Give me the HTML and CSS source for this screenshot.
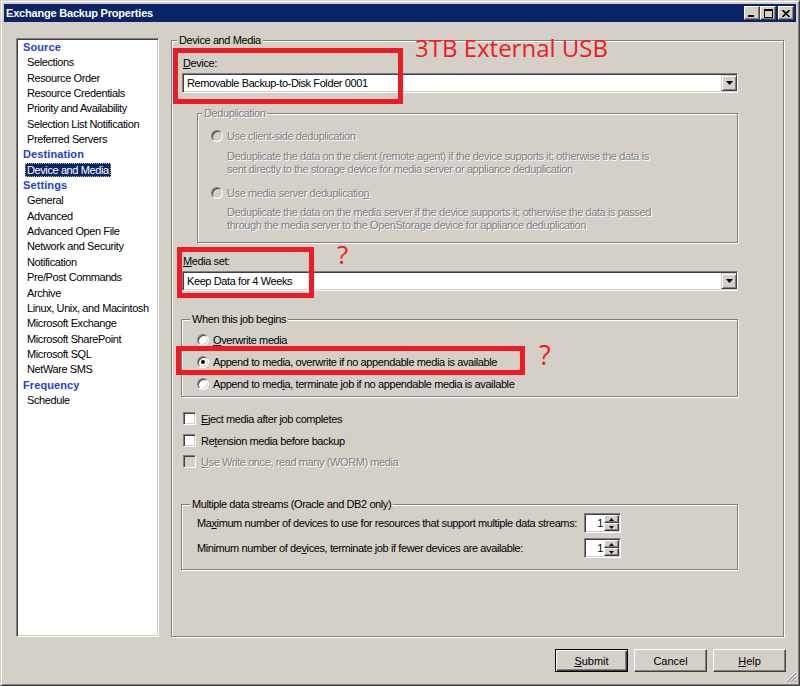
FILE: index.html
```html
<!DOCTYPE html>
<html lang="en">
<head>
  <meta charset="UTF-8" />
  <title>Exchange Backup Properties</title>
  <link rel="stylesheet" href="styles.css">
</head>
<body>
  <div class="window">
    <div class="titlebar">
      <span class="title">Exchange Backup Properties</span>
      <div class="caption">
        <span class="cap-btn"><svg width="8" height="8" viewBox="0 0 8 8"><rect x="0" y="6" width="6" height="2"/></svg></span>
        <span class="cap-btn"><svg width="9" height="9" viewBox="0 0 9 9"><rect x="0" y="0" width="9" height="2"/><rect x="0.5" y="0.5" width="8" height="8" fill="none" stroke="#000"/></svg></span>
        <span class="cap-btn close"><svg width="8" height="7" viewBox="0 0 8 7"><path d="M0.5 0l7 7M7.5 0l-7 7" stroke="#000" stroke-width="1.6"/></svg></span>
      </div>
    </div>

    <div class="content">
      <ul class="nav">
        <li class="head">Source</li>
        <li>Selections</li>
        <li>Resource Order</li>
        <li>Resource Credentials</li>
        <li>Priority and Availability</li>
        <li>Selection List Notification</li>
        <li>Preferred Servers</li>
        <li class="head">Destination</li>
        <li><span class="selected">Device and Media</span></li>
        <li class="head">Settings</li>
        <li>General</li>
        <li>Advanced</li>
        <li>Advanced Open File</li>
        <li>Network and Security</li>
        <li>Notification</li>
        <li>Pre/Post Commands</li>
        <li>Archive</li>
        <li>Linux, Unix, and Macintosh</li>
        <li>Microsoft Exchange</li>
        <li>Microsoft SharePoint</li>
        <li>Microsoft SQL</li>
        <li>NetWare SMS</li>
        <li class="head">Frequency</li>
        <li>Schedule</li>
      </ul>

      <div class="group main">
        <span class="group-title">Device and Media</span>
        <div class="group-body">
          <span class="field-label device-label"><u>D</u>evice:</span>
          <div class="combo">
            <span class="combo-text">Removable Backup-to-Disk Folder 0001</span>
            <span class="drop"><svg width="7" height="4" viewBox="0 0 7 4"><path d="M0 0h7L3.5 4z"/></svg></span>
          </div>

          <div class="group dedup disabled">
            <span class="group-title">Deduplication</span>
            <div class="group-body">
              <div class="option first"><span class="radio"></span><span>Use c<u>l</u>ient-side deduplication</span></div>
              <p class="desc desc-1">Deduplicate the data on the client (remote agent) if the device supports it; otherwise the data is<br>sent directly to the storage device for media server or appliance deduplication</p>
              <div class="option second"><span class="radio"></span><span>Use media server deduplicatio<u>n</u></span></div>
              <p class="desc desc-2">Deduplicate the data on the media server if the device supports it; otherwise the data is passed<br>through the media server to the OpenStorage device for appliance deduplication</p>
            </div>
          </div>

          <span class="field-label media-label"><u>M</u>edia set:</span>
          <div class="combo">
            <span class="combo-text">Keep Data for 4 Weeks</span>
            <span class="drop"><svg width="7" height="4" viewBox="0 0 7 4"><path d="M0 0h7L3.5 4z"/></svg></span>
          </div>

          <div class="group job">
            <span class="group-title">When this job begins</span>
            <div class="group-body">
              <div class="option first"><span class="radio"></span><span><u>O</u>verwrite media</span></div>
              <div class="option"><span class="radio checked"></span><span>Append to media, overwrite if no appendable media is available</span></div>
              <div class="option"><span class="radio"></span><span>Append to med<u>i</u>a, terminate job if no appendable media is available</span></div>
            </div>
          </div>

          <div class="check first"><span class="box"></span><span><u>E</u>ject media after job completes</span></div>
          <div class="check second"><span class="box"></span><span>Re<u>t</u>ension media before backup</span></div>
          <div class="check third disabled"><span class="box"></span><span><u>U</u>se Write once, read many (WORM) media</span></div>

          <div class="group streams">
            <span class="group-title">Multiple data streams (Oracle and DB2 only)</span>
            <div class="group-body">
              <div class="stream-row first">
                <span>Ma<u>x</u>imum number of devices to use for resources that support multiple data streams:</span>
                <span class="spin"><span class="spin-val">1</span><span class="spin-btns"><span class="spin-btn"><svg width="5" height="3" viewBox="0 0 5 3"><path d="M2.5 0L5 3H0z"/></svg></span><span class="spin-btn"><svg width="5" height="3" viewBox="0 0 5 3"><path d="M0 0h5L2.5 3z"/></svg></span></span></span>
              </div>
              <div class="stream-row">
                <span>Minimum number of de<u>v</u>ices, terminate job if fewer devices are available:</span>
                <span class="spin"><span class="spin-val">1</span><span class="spin-btns"><span class="spin-btn"><svg width="5" height="3" viewBox="0 0 5 3"><path d="M2.5 0L5 3H0z"/></svg></span><span class="spin-btn"><svg width="5" height="3" viewBox="0 0 5 3"><path d="M0 0h5L2.5 3z"/></svg></span></span></span>
              </div>
            </div>
          </div>
        </div>
      </div>
    </div>

    <div class="footer">
      <div class="buttons">
        <button class="btn default"><u>S</u>ubmit</button>
        <button class="btn">Cancel</button>
        <button class="btn"><u>H</u>elp</button>
      </div>
      <svg class="grip" width="11" height="11" viewBox="0 0 11 11">
        <path d="M11 1L1 11M11 5L5 11M11 9L9 11" stroke="#808080" stroke-width="1.4"/>
        <path d="M11 0L0 11M11 4L4 11M11 8L8 11" stroke="#fff"/>
      </svg>
    </div>

    <!-- annotations drawn over the dialog -->
    <div class="mark mark-device"></div>
    <div class="mark mark-media"></div>
    <div class="mark mark-append"></div>
    <span class="note note-usb">3TB External USB</span>
    <span class="note note-q1">?</span>
    <span class="note note-q2">?</span>
  </div>
</body>
</html>
```

FILE: styles.css
```css
* {
  margin: 0;
  padding: 0;
  box-sizing: border-box;
}

body {
  font-family: "Liberation Sans", Arial, sans-serif;
  font-size: 11px;
  letter-spacing: -0.4px;
  color: #000;
  background: #d4d0c8;
}

.window {
  position: relative;
  width: 800px;
  height: 686px;
  display: flex;
  flex-direction: column;
  padding: 3px;
  background: #d4d0c8;
  border: 1px solid;
  border-color: #d4d0c8 #404040 #404040 #d4d0c8;
  box-shadow: inset 1px 1px #fff, inset -1px -1px #808080;
}

/* title bar */
.titlebar {
  height: 18px;
  display: flex;
  align-items: center;
  justify-content: space-between;
  background: #0a246a;
  padding: 0 2px 0 2px;
}

.title {
  color: #fff;
  font-weight: bold;
  letter-spacing: -0.2px;
}

.caption {
  display: flex;
}

.cap-btn {
  width: 16px;
  height: 14px;
  display: flex;
  align-items: center;
  justify-content: center;
  background: #d4d0c8;
  border: 1px solid;
  border-color: #fff #404040 #404040 #fff;
  box-shadow: inset -1px -1px #808080;
}

.cap-btn.close {
  margin-left: 2px;
}

/* body */
.content {
  flex: 1;
  display: flex;
  gap: 12px;
  padding: 16px 12px 0 12px;
  min-height: 0;
}

.nav {
  width: 143px;
  list-style: none;
  background: #fff;
  border: 1px solid;
  border-color: #808080 #fff #fff #808080;
  box-shadow: inset 1px 1px #404040, inset -1px -1px #d4d0c8;
  padding: 1px 0 0 6px;
}

.nav li {
  line-height: 15.35px;
  height: 15.35px;
  padding-left: 4px;
  white-space: nowrap;
}

.nav .head {
  padding-left: 0;
  color: #1f3fd8;
  font-weight: bold;
  letter-spacing: 0.1px;
}

.nav .selected {
  display: inline-block;
  margin-left: -2px;
  padding: 0 1px;
  line-height: 12px;
  background: #0a246a;
  color: #fff;
  border: 1px dotted #c8b878;
}

/* etched group boxes */
.group {
  border: 1px solid #808080;
  box-shadow: inset 1px 1px #fff, 1px 1px #fff;
}

.group-title {
  display: table;
  margin: -7px 0 0 5px;
  padding: 0 2px;
  line-height: 13px;
  background: #d4d0c8;
}

.main {
  flex: 1;
  margin-top: 2px;
}

.main > .group-body {
  padding: 0 45px 0 10px;
}

.field-label {
  display: block;
  line-height: 13px;
  padding-left: 1px;
}

.device-label {
  margin-top: 10px;
}

.media-label {
  margin-top: 12px;
}

.combo {
  margin-top: 3px;
  height: 20px;
  display: flex;
  align-items: center;
  justify-content: space-between;
  background: #fff;
  border: 1px solid;
  border-color: #808080 #fff #fff #808080;
  box-shadow: inset 1px 1px #404040, inset -1px -1px #d4d0c8;
  padding-left: 4px;
}

.drop {
  width: 16px;
  height: 16px;
  display: flex;
  align-items: center;
  justify-content: center;
  background: #d4d0c8;
  border: 1px solid;
  border-color: #d4d0c8 #404040 #404040 #d4d0c8;
  box-shadow: inset 1px 1px #fff, inset -1px -1px #808080;
}

/* deduplication */
.dedup {
  margin: 20px 0 0 15px;
}

.dedup .group-title {
  margin-left: 4px;
}

.dedup > .group-body {
  padding: 0 0 10px 13px;
}

.option {
  display: flex;
  align-items: center;
  gap: 4px;
  height: 13px;
  margin-top: 9px;
  white-space: nowrap;
}

.dedup .option.first {
  margin-top: 9px;
}

.dedup .option.second {
  margin-top: 10px;
}

.desc {
  padding-left: 16px;
  line-height: 13px;
  white-space: nowrap;
}

.desc-1 {
  margin-top: 8px;
}

.desc-2 {
  margin-top: 7px;
}

.disabled,
.disabled .group-title {
  color: #808080;
  text-shadow: 1px 1px #fff;
}

.radio {
  position: relative;
  width: 12px;
  height: 12px;
  flex: none;
  border-radius: 50%;
  background: #fff;
  border: 1px solid;
  border-color: #808080 #fff #fff #808080;
  box-shadow: inset 1px 1px #404040, inset -1px -1px #d4d0c8;
}

.disabled .radio,
.disabled .box {
  background: #d4d0c8;
}

.radio.checked::after {
  content: "";
  position: absolute;
  left: 3px;
  top: 3px;
  width: 4px;
  height: 4px;
  border-radius: 50%;
  background: #000;
}

/* when this job begins */
.job {
  margin: 28px 0 0 -1px;
}

.job .group-title,
.streams .group-title {
  margin-left: 8px;
}

.job > .group-body {
  padding: 0 0 6px 15px;
}

.job .option.first {
  margin-top: 7px;
}

/* checkboxes */
.check {
  display: flex;
  align-items: center;
  gap: 5px;
  height: 13px;
  margin-left: 1px;
}

.check.first {
  margin-top: 15px;
}

.check.second {
  margin-top: 9px;
}

.check.third {
  margin-top: 8px;
}

.box {
  width: 13px;
  height: 13px;
  flex: none;
  background: #fff;
  border: 1px solid;
  border-color: #808080 #fff #fff #808080;
  box-shadow: inset 1px 1px #404040, inset -1px -1px #d4d0c8;
}

/* multiple data streams */
.streams {
  margin: 36px 0 0 -1px;
}

.streams > .group-body {
  padding: 0 0 11px 15px;
}

.stream-row {
  display: grid;
  grid-template-columns: 387px 37px;
  align-items: center;
  height: 20px;
  margin-top: 5px;
  white-space: nowrap;
}

.stream-row.first {
  margin-top: 2px;
}

.spin {
  width: 37px;
  height: 20px;
  display: flex;
  background: #fff;
  border: 1px solid;
  border-color: #808080 #fff #fff #808080;
  box-shadow: inset 1px 1px #404040, inset -1px -1px #d4d0c8;
  padding: 1px 1px 1px 0;
}

.spin-val {
  flex: 1;
  text-align: right;
  line-height: 16px;
  padding-right: 1px;
}

.spin-btns {
  width: 15px;
  display: flex;
  flex-direction: column;
}

.spin-btn {
  flex: 1;
  display: flex;
  align-items: center;
  justify-content: center;
  background: #d4d0c8;
  border: 1px solid;
  border-color: #fff #404040 #404040 #fff;
  box-shadow: inset -1px -1px #808080;
}

/* footer buttons */
.footer {
  height: 45px;
  display: flex;
  justify-content: flex-end;
  align-items: flex-end;
}

.buttons {
  display: flex;
  gap: 6px;
  margin-bottom: 10px;
}

.btn {
  width: 73px;
  height: 23px;
  font: inherit;
  color: #000;
  background: #d4d0c8;
  border: 1px solid;
  border-color: #fff #404040 #404040 #fff;
  box-shadow: inset -1px -1px #808080;
}

.btn.default {
  border-color: #000;
  box-shadow: inset 1px 1px #fff, inset -1px -1px #404040, inset -2px -2px #808080;
}

.grip {
  display: block;
  width: 10px;
  height: 10px;
}

/* red annotations */
.mark {
  position: absolute;
  border: 5px solid #ed1c24;
}

.mark-device {
  left: 172px;
  top: 47px;
  width: 230px;
  height: 56px;
}

.mark-media {
  left: 176px;
  top: 246px;
  width: 137px;
  height: 51px;
}

.mark-append {
  left: 175px;
  top: 345px;
  width: 349px;
  height: 29px;
}

.note {
  position: absolute;
  color: #ed1c24;
  font-family: "Open Sans", "Noto Sans", sans-serif;
  line-height: 1;
  letter-spacing: 0;
}

.note-usb {
  left: 414px;
  top: 35px;
  font-size: 24px;
}

.note-q1 {
  left: 336px;
  top: 240px;
  font-size: 26px;
}

.note-q2 {
  left: 538px;
  top: 340px;
  font-size: 27px;
}
```
